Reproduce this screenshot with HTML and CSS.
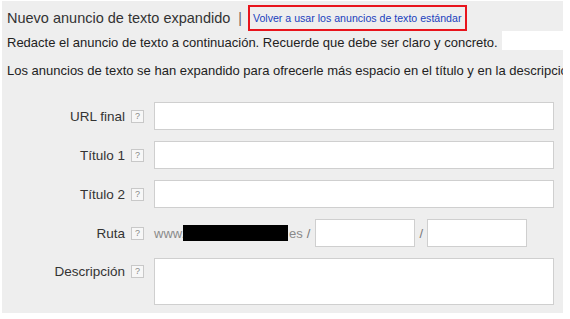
FILE: index.html
```html
<!DOCTYPE html>
<html lang="es">
<head>
<meta charset="utf-8">
<link rel="stylesheet" href="styles.css">
</head>
<body>
<div class="panel">
  <div class="head">
    <span class="title">Nuevo anuncio de texto expandido</span>
    <span class="sep">|</span>
    <span class="linkbox"><a class="link">Volver a usar los anuncios de texto estándar</a></span>
  </div>
  <p class="line l1">Redacte el anuncio de texto a continuación. Recuerde que debe ser claro y concreto.<span class="mask"></span></p>
  <p class="line l2">Los anuncios de texto se han expandido para ofrecerle más espacio en el título y en la descripción.</p>
  <div class="form">
    <div class="row">
      <div class="lab"><span>URL final</span><span class="help">?</span></div>
      <div class="field wide"></div>
    </div>
    <div class="row">
      <div class="lab"><span>Título 1</span><span class="help">?</span></div>
      <div class="field wide"></div>
    </div>
    <div class="row">
      <div class="lab"><span>Título 2</span><span class="help">?</span></div>
      <div class="field wide"></div>
    </div>
    <div class="row">
      <div class="lab"><span>Ruta</span><span class="help">?</span></div>
      <div class="path">
        <span class="www">www.<span class="redact"></span>es</span>
        <span class="slash">/</span>
        <div class="field small"></div>
        <span class="slash s2">/</span>
        <div class="field small"></div>
      </div>
    </div>
    <div class="row top">
      <div class="lab"><span>Descripción</span><span class="help">?</span></div>
      <div class="field wide tall"></div>
    </div>
  </div>
</div>
</body>
</html>
```
FILE: styles.css
```css
html, body {
  margin: 0;
  padding: 0;
  background: #ffffff;
  font-family: "Liberation Sans", Arial, sans-serif;
  color: #333333;
  overflow: hidden;
}
.panel {
  margin: 1px 7px 0 2px;
  height: 312px;
  background: #eeeeee;
  padding-left: 5px;
  box-sizing: border-box;
  overflow: hidden;
  position: relative;
}
.head {
  display: flex;
  align-items: center;
  height: 30px;
  padding-top: 4px;
  box-sizing: border-box;
  white-space: nowrap;
}
.title {
  font-size: 14.5px;
  color: #333;
}
.sep {
  font-size: 14px;
  color: #666;
  margin: 0 6px 0 8px;
}
.linkbox {
  border: 2px solid #e8141c;
  padding: 3px 4px 4px 3px;
  line-height: 13px;
  background: #eeeeee;
}
.link {
  font-size: 10.6px;
  color: #1a3fbd;
}
.line {
  margin: 0;
  font-size: 13px;
  white-space: nowrap;
  color: #222;
  height: 14px;
  line-height: 14px;
}
.l1 {
  margin-top: 5px;
}
.l2 {
  margin-top: 14px;
}
.mask {
  position: absolute;
  left: 500px;
  top: 30px;
  width: 61px;
  height: 19px;
  background: #ffffff;
}
.form {
  margin-top: 24px;
  display: flex;
  flex-direction: column;
  gap: 11px;
}
.row {
  display: flex;
  align-items: center;
}
.row.top {
  align-items: flex-start;
}
.lab {
  width: 137px;
  display: flex;
  justify-content: flex-end;
  align-items: center;
  gap: 6px;
  font-size: 13.5px;
  color: #333;
  margin-right: 10px;
}
.row.top .lab {
  padding-top: 6px;
}
.help {
  width: 11px;
  height: 11px;
  border: 1px solid #c8c8c8;
  background: #f7f7f7;
  font-size: 9px;
  line-height: 11px;
  text-align: center;
  color: #888;
}
.field {
  background: #ffffff;
  border: 1px solid #cfcfcf;
  box-sizing: border-box;
  height: 28px;
}
.wide {
  width: 400px;
}
.tall {
  height: 47px;
}
.path {
  display: flex;
  align-items: center;
  font-size: 13px;
  color: #8a8a8a;
}
.www {
  display: flex;
  align-items: center;
  color: #8a8a8a;
}
.redact {
  display: inline-block;
  width: 105px;
  height: 16px;
  background: #000;
  margin: 0 1px 0 -2px;
}
.slash {
  color: #777;
  margin: 0 5px 0 4px;
}
.s2 {
  margin: 0 4px 0 4px;
}
.small {
  width: 100px;
}
```
